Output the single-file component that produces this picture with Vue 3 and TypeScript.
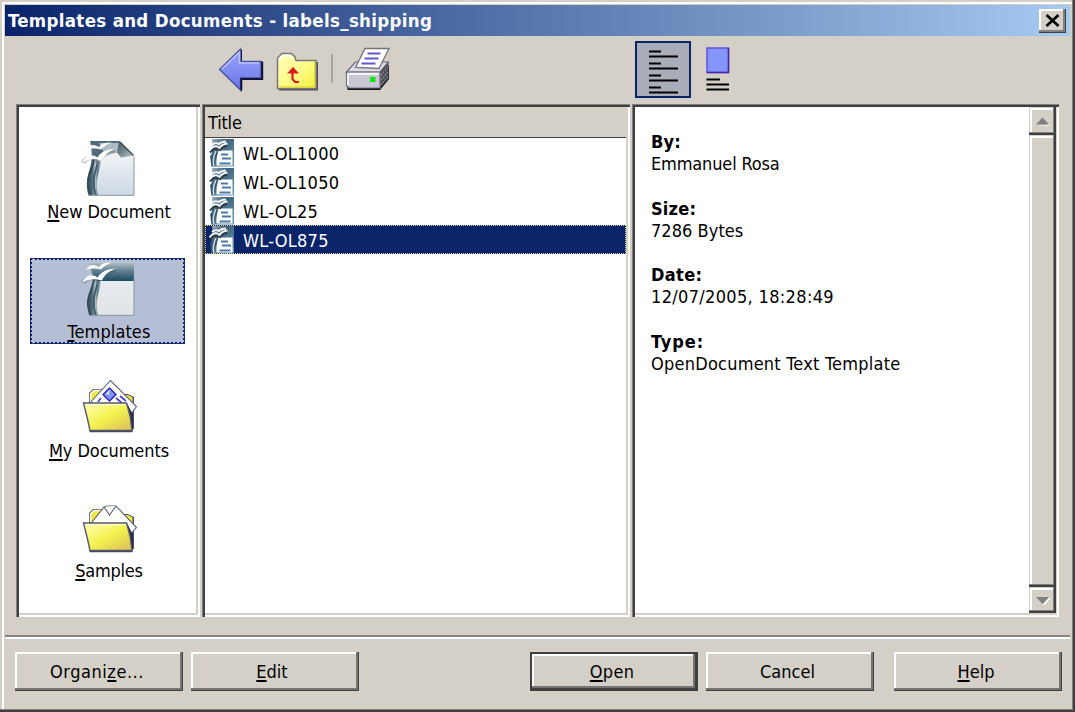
<script setup lang="ts">
interface Label { pre: string; key: string; post: string }
interface Place extends Label { icon: 'new' | 'template' | 'documents' | 'samples'; cls: string }
interface Action extends Label { cls: string }

const places: Place[] = [
  { pre: '', key: 'N', post: 'ew Document', icon: 'new', cls: '' },
  { pre: '', key: 'T', post: 'emplates', icon: 'template', cls: 'active' },
  { pre: '', key: 'M', post: 'y Documents', icon: 'documents', cls: '' },
  { pre: '', key: 'S', post: 'amples', icon: 'samples', cls: 'tight' },
]
const files = ['WL-OL1000', 'WL-OL1050', 'WL-OL25', 'WL-OL875']
const selected = 'WL-OL875'
const details = [
  { name: 'By:', value: 'Emmanuel Rosa', cls: 'd0' },
  { name: 'Size:', value: '7286 Bytes', cls: 'd1' },
  { name: 'Date:', value: '12/07/2005, 18:28:49', cls: 'd2' },
  { name: 'Type:', value: 'OpenDocument Text Template', cls: 'd3' },
]
const actions: Action[] = [
  { pre: 'Organi', key: 'z', post: 'e...', cls: 'organize' },
  { pre: '', key: 'E', post: 'dit', cls: 'edit' },
  { pre: '', key: 'O', post: 'pen', cls: 'open' },
  { pre: 'Cancel', key: '', post: '', cls: 'cancel' },
  { pre: '', key: 'H', post: 'elp', cls: 'help' },
]
</script>

<template>
  <div class="window">
    <svg class="defs" width="0" height="0">
      <defs>
        <linearGradient id="page" x1="0" y1="0" x2="0" y2="1">
          <stop offset="0" stop-color="#fbfcfd" /><stop offset="1" stop-color="#ccd8e3" />
        </linearGradient>
        <linearGradient id="sheet" x1="0" y1="0" x2="0" y2="1">
          <stop offset="0" stop-color="#eaf2f8" /><stop offset="1" stop-color="#e0e3e6" />
        </linearGradient>
        <linearGradient id="band" x1="0" y1="0" x2="0" y2="1">
          <stop offset="0" stop-color="#c3cdd3" /><stop offset=".5" stop-color="#5f7f90" /><stop offset="1" stop-color="#1c4a62" />
        </linearGradient>
        <linearGradient id="spine" x1="0" y1="0" x2="1" y2="0">
          <stop offset="0" stop-color="#3a525e" /><stop offset=".35" stop-color="#4f6c7a" /><stop offset=".55" stop-color="#b7c6ce" /><stop offset=".75" stop-color="#5b7583" /><stop offset="1" stop-color="#c3ced5" />
        </linearGradient>
        <linearGradient id="fold" x1="0" y1="0" x2="1" y2="1">
          <stop offset="0" stop-color="#3d505a" /><stop offset=".55" stop-color="#7e8e95" /><stop offset="1" stop-color="#c8d0d4" />
        </linearGradient>
        <linearGradient id="small" x1="0" y1="0" x2="1" y2="1">
          <stop offset="0" stop-color="#a5b5bf" /><stop offset=".35" stop-color="#3c6078" /><stop offset="1" stop-color="#6f9ab8" />
        </linearGradient>
        <linearGradient id="yellow" x1="0" y1="0" x2="1" y2="1">
          <stop offset="0" stop-color="#ffffb4" /><stop offset=".5" stop-color="#f4f250" /><stop offset="1" stop-color="#d9bc5a" />
        </linearGradient>
        <linearGradient id="lemon" x1="0" y1="0" x2="1" y2="1">
          <stop offset="0" stop-color="#ffffc0" /><stop offset=".6" stop-color="#fbfb80" /><stop offset="1" stop-color="#f0ee30" />
        </linearGradient>
        <linearGradient id="arrow" x1="0" y1="0" x2="0" y2="1">
          <stop offset="0" stop-color="#9aa6fb" /><stop offset="1" stop-color="#6a76e6" />
        </linearGradient>
      </defs>
    </svg>

    <header class="titlebar">
      <span class="caption">Templates and Documents - labels_shipping</span>
      <button class="close" aria-label="Close">
        <svg width="15" height="13" viewBox="0 0 15 13"><path d="M1.500 1l12 11M13.500 1l-12 11" stroke="#000" stroke-width="2.700" fill="none" /></svg>
      </button>
    </header>

    <div class="toolbar">
      <svg class="back" width="47" height="46" viewBox="0 0 47 46">
        <path d="M2 23L24 2v13h20v18H24v12z" fill="#11113c" />
        <path d="M1.500 22.500L22.500 2v12.500h20.500v16.500H22.500v12z" fill="url(#arrow)" stroke="#4a4f9c" stroke-width="1.300" />
        <path d="M4 22L21.500 5v11H41" fill="none" stroke="#b9c2ff" stroke-width="1.500" />
        <path d="M23.300 42.500V32h20.900V14.500" fill="none" stroke="#12123f" stroke-width="2" />
      </svg>
      <svg class="up" width="43" height="39" viewBox="0 0 43 39">
        <path d="M3 37.500h38V10" fill="none" stroke="#4e4e58" stroke-width="2" />
        <path d="M1.500 36.500V6l4.500-4.500h9.500L19 5l1 3.500h20v28z" fill="url(#lemon)" stroke="#77787f" stroke-width="1.500" />
        <path d="M3.500 8V6.500L6.500 3.500h8.500l2.500 3" fill="none" stroke="#fff" stroke-width="1.500" />
        <path d="M38.700 10v25H3.500" fill="none" stroke="#e2d640" stroke-width="1.500" />
        <path d="M11 21.500l6-6.500 6 6.500z" fill="#df1720" />
        <path d="M16.500 20v7l2.500 3H23" fill="none" stroke="#df1720" stroke-width="2.200" />
      </svg>
      <i class="divider"></i>
      <svg class="print" width="47" height="45" viewBox="0 0 47 45">
        <path d="M3 43l32-0 9-11V19l-6-3-27 2-9 9v14z" fill="#101018" />
        <path d="M1.500 25l9-10h33L35 25z" fill="#dcdce4" stroke="#6b6b75" stroke-width="1.200" />
        <path d="M35 25l8.500-9.500V31L35 40.500z" fill="#50505a" />
        <path d="M36 28l7-8M36 33l7-8M36 38l7-8" stroke="#92929c" stroke-width="1.200" stroke-dasharray="1.500 1.500" />
        <path d="M1.500 25H35v16H4l-2.500-2z" fill="#c8c8d2" stroke="#73737d" stroke-width="1.200" />
        <path d="M3 27h30.500M3 27v11" stroke="#f4f4fa" stroke-width="1.800" fill="none" />
        <path d="M10.500 20.500L20 1.500h24L34 21.500z" fill="#fff" stroke="#73737d" stroke-width="1.300" />
        <path d="M22.500 6.500h13M19.500 11.500h14M16.500 16.500h14" stroke="#6257c8" stroke-width="1.900" />
        <rect x="25" y="30" width="5.500" height="5" fill="#10e510" />
      </svg>
      <button class="view-on" aria-label="Document properties">
        <svg width="30" height="44" viewBox="0 0 30 44">
          <path d="M0 1.500h12M0 6.500h29M0 13.500h12M0 18.500h29M0 25.500h12M0 30.500h29M0 37.500h12M0 42.500h29" stroke="#000" stroke-width="1.900" />
        </svg>
      </button>
      <svg class="preview" width="24" height="45" viewBox="0 0 24 45">
        <rect x="1" y="1" width="21.500" height="24.500" fill="#8496fb" stroke="#6253dc" stroke-width="1.500" />
        <path d="M22.500 1v24.500H1" fill="none" stroke="#4527a8" stroke-width="1.500" />
        <path d="M.500 32.500h13.500M.500 37.500h22.500M.500 42.500h22.500" stroke="#000" stroke-width="1.900" />
      </svg>
    </div>

    <main class="body">
      <nav class="panel places">
        <div v-for="p in places" :key="p.icon" class="place" :class="p.cls">
          <svg v-if="p.icon === 'new' || p.icon === 'template'" width="56" height="57" viewBox="0 0 56 57">
            <g v-if="p.icon === 'new'">
              <path d="M9 2h30l14 15v39.500H8C4 45 7 36 10 27c2-8 1-17-1-25z" fill="url(#page)" />
              <path d="M9 2h30l-5 6-16 8-3 10c-3 10-3 20-1 30.500H7.500C4 45 7 36 9.500 27c2-8 1.500-17-.500-25z" fill="#526b78" />
              <path d="M18 4h20l2 9-16 3z" fill="#aebcc4" />
              <path d="M38 2l15 14.500-13 2-4-5z" fill="url(#fold)" />
              <path d="M39 3l13.500 13.500" stroke="#354750" stroke-width="1.300" />
            </g>
            <g v-else>
              <path d="M9 2h44v54H14V20z" fill="url(#sheet)" />
              <path d="M8 2h45v20H13z" fill="url(#band)" />
            </g>
            <path d="M13 20c-1 10-7 16-6 27l1.500 9.500H17C13 43 19 32 20 23z" fill="url(#spine)" />
            <path d="M13 20c-1 10-7.500 16-6 27l2 9" fill="none" stroke="#2f4855" stroke-width="1.800" />
            <path d="M16.500 25c-4 12-5 20-2 31" fill="none" stroke="#405b69" stroke-width="1.800" />
            <path d="M53 18v38.300H8" fill="none" stroke="#859aa5" stroke-width="1" />
            <path d="M2 24c3-6 9-7 15-2 4-7 9-9 17-11" fill="none" stroke="#40535d" stroke-opacity=".300" stroke-width="5" />
            <path d="M1.500 23.500c2-7 9-9.500 15-5 3-5 9-9 19-9-7 2-12 6-14.500 12-8-2-13-2-19.500 2z" fill="#fff" />
            <path d="M5 11c3-6 8-6 13-3 3-4 7-4.500 13-4.500-5 1.500-8 4-11 7-6-1.500-10-1.500-15 .500z" fill="#f6f8f9" />
          </svg>
          <svg v-else width="56" height="57" viewBox="0 0 56 57">
            <path d="M8 50V15l4-4h11l4 5h20l6 3v32z" fill="#4d5269" />
            <path d="M9 30V15.500l3.500-3.200h10L26 17h21l4.500 2.500V28z" fill="#f2e83c" />
            <path d="M9.500 24v-8l3.500-3.500h8.500" fill="none" stroke="#fff" stroke-width="1.500" />
            <g v-if="p.icon === 'documents'">
              <path d="M6 28L29.500 2.500 55.500 28.500l-5 6.500-10-7z" fill="#fff" stroke="#5c6278" stroke-width="1.100" />
              <path d="M28.500 10l6.500 6.500-6.500 6.500L22 16.500z" fill="#7e92f4" stroke="#2a22b8" stroke-width="1.300" />
              <path d="M28.500 11.500l-3.500 4.500 3 1z" fill="#dfe6ff" />
              <path d="M17 24l3-4M35 20l6 5M39 18l6 5" stroke="#4a42d0" stroke-width="1.700" />
            </g>
            <g v-else>
              <path d="M8 28L23 9l3-1h9l20.500 21.500-5 5.500-10-7z" fill="#fff" stroke="#5c6278" stroke-width="1.100" />
              <path d="M23 9l5.500 8L35 8" fill="#fff" stroke="#5c6278" stroke-width="1.100" />
            </g>
            <path d="M46 25l6 12v15h-2z" fill="#262c48" />
            <path d="M2.500 25h43l3.500 13 2 14.500H9L6.500 41z" fill="url(#yellow)" stroke="#565b70" stroke-width="1.400" />
            <path d="M4 26.700h41" stroke="#ffffd8" stroke-width="1.200" />
            <path d="M8.500 53.500h43" stroke="#454a60" stroke-width="1.300" />
          </svg>
          <span class="label">{{ p.pre }}<u>{{ p.key }}</u>{{ p.post }}</span>
        </div>
      </nav>

      <section class="panel files">
        <div class="column">Title</div>
        <div v-for="f in files" :key="f" class="row" :class="{ selected: f === selected }">
          <svg width="26" height="28" viewBox="0 0 26 28">
            <path d="M3 0h22v27.500H2.500C0 18 5 13 3 0z" fill="url(#small)" />
            <path d="M1 17c3-2 5-4 6-7l2 4c-3 5-4 9-3 13.500H3" fill="#31566c" />
            <path d="M7 12c-3 6-3.500 10-2 15.500" fill="none" stroke="#d4dfe6" stroke-width="1.500" />
            <path d="M9.500 11.500h14v15H7.500c-.500-5 .500-10 2-15z" fill="#fff" />
            <path d="M12 15.500h7M13 19.500h9M10.500 24.500h11" stroke="#4c79a6" stroke-width="1.900" />
            <path d="M1 13.500c4-5.500 7-5 10-2.500 2-3 4-4 7-4.500" fill="none" stroke="#27343c" stroke-width="2" />
            <path d="M.500 11.500c3-5 7-5 10-2.500 2-3 4-4 8-4.500M3 6c3-3 5-2 7-1 2-2 4-2.500 7-2.500" fill="none" stroke="#f3f6f8" stroke-width="2" />
          </svg>
          <span>{{ f }}</span>
        </div>
      </section>

      <section class="panel info">
        <dl>
          <template v-for="d in details" :key="d.name">
            <dt :class="d.cls">{{ d.name }}</dt>
            <dd :class="d.cls">{{ d.value }}</dd>
          </template>
        </dl>
        <div class="scrollbar">
          <div class="cap"><svg width="14" height="9" viewBox="0 0 14 9"><path d="M2 8.500h12l-1-1.500z" fill="#fff" /><path d="M0 7.500L6.500.500l6.500 7z" fill="#808080" /></svg></div>
          <div class="thumb"></div>
          <div class="cap lower"><svg width="14" height="9" viewBox="0 0 14 9"><path d="M7.500 9L14 2" stroke="#fff" stroke-width="1.500" /><path d="M0 1h13L6.500 8z" fill="#808080" /></svg></div>
        </div>
      </section>
    </main>

    <hr class="rule" />
    <footer class="actions">
      <button v-for="a in actions" :key="a.cls" class="action" :class="a.cls"><span>{{ a.pre }}<u v-if="a.key">{{ a.key }}</u>{{ a.post }}</span></button>
    </footer>
  </div>
</template>

<style>
html, body { margin: 0; overflow: hidden; background: #d4d0c8; }
</style>

<style scoped>
.window {
  box-sizing: border-box;
  width: 1075px;
  height: 712px;
  padding: 5px 5px 4px;
  display: flex;
  flex-direction: column;
  background: #d4d0c8;
  box-shadow: inset -2px -2px #404040, inset -3px -3px #808080, inset 2px 2px #d4d0c8, inset 4px 4px #fff;
  color: #000;
  font: 18px/22px "DejaVu Sans Condensed", "DejaVu Sans", sans-serif;
  font-stretch: condensed;
}
.defs { position: absolute; }
svg { display: block; flex: none; }
button { font: inherit; color: inherit; padding: 0; margin: 0; border: 0; border-radius: 0; background: #d4d0c8; }
u { text-decoration: underline; text-decoration-thickness: 2px; text-underline-offset: 2px; text-decoration-skip-ink: none; }

.titlebar {
  flex: none;
  height: 31px;
  display: flex;
  align-items: center;
  justify-content: space-between;
  padding: 0 4px 0 3px;
  box-sizing: border-box;
  background: linear-gradient(90deg, #0a246a, #a6caf0);
  color: #fff;
  font-weight: bold;
}
.caption { font-size: 18.500px; letter-spacing: .330px; }
.close {
  width: 27px;
  height: 24px;
  display: flex;
  align-items: center;
  justify-content: center;
  box-shadow: inset -1px -1px #404040, inset -3px -3px #808080, inset 2px 2px #fff;
}

.toolbar { flex: none; height: 68px; display: flex; align-items: flex-start; }
.back { margin: 11px 0 0 213px; }
.up { margin: 16px 0 0 11px; }
.divider { width: 2px; height: 29px; margin: 18px 0 0 12px; background: #a8a6a2; }
.print { margin: 11px 0 0 12px; }
.view-on {
  box-sizing: border-box;
  width: 56px;
  height: 57px;
  margin: 5px 0 0 243px;
  padding: 4px 0 0 12px;
  border: 2px solid #0a246a;
  background: #a9adb7;
}
.preview { margin: 11px 0 0 15px; }

.body { flex: none; height: 513px; display: flex; padding-left: 11px; }
.panel {
  box-sizing: border-box;
  height: 513px;
  padding: 3px 4px 4px 3px;
  background: #fff;
  box-shadow: inset 1px 1px #808080, inset 3px 3px #404040, inset -2px -2px #fff, inset -4px -4px #d4d0c8;
}
.places { width: 184px; margin-right: 2px; padding-top: 34px; display: flex; flex-direction: column; align-items: center; gap: 33.600px; }
.place { box-sizing: border-box; width: 155px; height: 86px; padding: 1px 0 0 3px; flex: none; display: flex; flex-direction: column; align-items: center; }
.place.active { background: #b5bed5; outline: 2px dotted #0a246a; outline-offset: -2px; box-shadow: inset 0 0 0 1px #24386f; }
.label { margin-top: 5px; white-space: nowrap; letter-spacing: -.080px; }
.active .label { letter-spacing: .100px; }
.tight .label { letter-spacing: -.250px; }

.files { width: 428px; margin-right: 2px; }
.column { box-sizing: border-box; height: 31px; padding: 5px 0 0 3px; border-bottom: 1px solid #404040; background: #d4d0c8; letter-spacing: -.200px; }
.row { box-sizing: border-box; height: 29px; padding-left: 4px; display: flex; align-items: center; gap: 8px; letter-spacing: .250px; }
.row.selected { background: #0a246a; color: #fff; outline: 1px dotted #d9cf88; outline-offset: -1px; }
.row span { padding-top: 3px; }

.info { width: 427px; display: flex; justify-content: space-between; }
dl { margin: 24px 0 0 16px; line-height: 22.200px; }
dt { font-weight: bold; letter-spacing: .200px; }
dd { margin: 0 0 22.100px; letter-spacing: -.150px; }
dt.d2 { letter-spacing: .350px; }
dt.d3 { letter-spacing: .900px; }
dd.d1 { letter-spacing: .050px; }
dd.d2 { letter-spacing: .330px; }
dd.d3 { letter-spacing: .230px; }
.scrollbar { width: 27px; margin-right: -1px; display: flex; flex-direction: column; background: #d4d0c8; }
.cap, .thumb { box-shadow: inset -2px -2px #404040, inset -3px -3px #808080, inset 1px 1px #d4d0c8, inset 3px 3px #fff; }
.cap { height: 28px; flex: none; display: flex; align-items: center; justify-content: center; }
.lower { height: 26px; }
.thumb { flex: 1; }

.rule { flex: none; width: 100%; height: 2px; margin: 18px 0 0; border: 0; border-top: 2px solid #868582; background: #fff; }
.actions { display: flex; padding: 13px 0 0 10px; }
.action {
  width: 168px;
  height: 39px;
  flex: none;
  display: flex;
  align-items: center;
  justify-content: center;
  box-shadow: inset -1px -1px #404040, inset -3px -3px #747472, inset 2px 2px #fff;
}
.action span { padding-right: 4px; }
.organize { letter-spacing: .550px; margin-right: 8px; }
.edit { margin-right: 171px; }
.edit span { padding-right: 6px; }
.open { letter-spacing: .300px; margin-right: 8px; border: 2px solid #404040; box-sizing: border-box; }
.cancel { margin-right: 20px; }
.cancel span { padding-right: 5px; }
</style>
